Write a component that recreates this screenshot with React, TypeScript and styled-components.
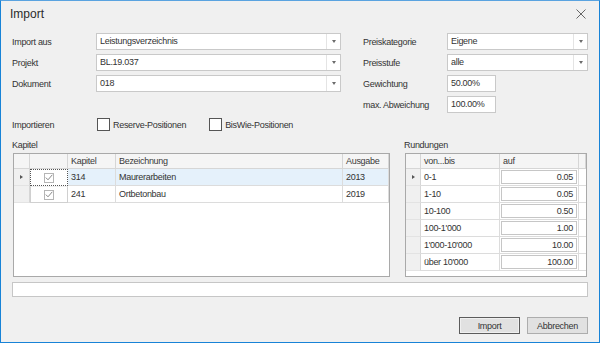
import styled, { createGlobalStyle } from "styled-components";

const GlobalStyle = createGlobalStyle`
  body {
    margin: 0;
    background: #ffffff;
  }
`;

const Window = styled.div`
  width: 600px;
  height: 343px;
  box-sizing: border-box;
  border: 1px solid #1883d7;
  border-top-color: #5aa3e0;
  background: #f0f0f0;
  display: flex;
  flex-direction: column;
  font-family: "Liberation Sans", Arial, sans-serif;
  font-size: 9px;
  letter-spacing: -0.3px;
  color: #333;
`;

const TitleBar = styled.div`
  height: 26px;
  display: flex;
  align-items: center;
  justify-content: space-between;
  padding: 0 13px 0 9px;
`;

const Title = styled.span`
  font-size: 12px;
  letter-spacing: 0;
  color: #2b2b2b;
`;

const CloseButton = styled.button`
  width: 10px;
  height: 10px;
  padding: 0;
  border: 0;
  background: none;
  display: flex;
`;

const Body = styled.div`
  flex: 1;
  display: flex;
  flex-direction: column;
  padding: 6px 11px 8px 11px;
`;

const FormRow = styled.div`
  display: flex;
  gap: 22px;
`;

const FormGrid = styled.div<{ $label: number; $field: number }>`
  display: grid;
  grid-template-columns: ${(p) => p.$label}px ${(p) => p.$field}px;
  grid-auto-rows: 17px;
  row-gap: 4px;
  align-items: center;
`;

const Label = styled.span`
  color: #333;
  white-space: nowrap;
`;

const Combo = styled.div`
  height: 17px;
  box-sizing: border-box;
  border: 1px solid #c9c9c9;
  background: #fff;
  display: flex;
`;

const ComboText = styled.span`
  flex: 1;
  padding-left: 3px;
  line-height: 15px;
`;

const ComboButton = styled.span`
  width: 13px;
  border-left: 1px solid #e4e4e4;
  display: flex;
  align-items: center;
  justify-content: center;

  &::after {
    content: "";
    border-left: 2.5px solid transparent;
    border-right: 2.5px solid transparent;
    border-top: 3px solid #6b6b6b;
  }
`;

const TextBox = styled.div<{ $width?: number }>`
  width: ${(p) => (p.$width ? `${p.$width}px` : "auto")};
  height: 17px;
  box-sizing: border-box;
  border: 1px solid #c9c9c9;
  background: #fff;
  padding-left: 3px;
  line-height: 15px;
`;

const OptionsRow = styled.div`
  display: flex;
  align-items: center;
  height: 13px;
  margin-top: 5px;
`;

const OptionsLabel = styled.span`
  width: 85px;
`;

const CheckOption = styled.label`
  display: flex;
  align-items: center;
  gap: 3px;
  margin-right: 23px;
`;

const CheckBox = styled.span`
  width: 13px;
  height: 13px;
  box-sizing: border-box;
  border: 1px solid #555;
  background: #fff;
`;

const GridsRow = styled.div`
  display: flex;
  gap: 14px;
  margin-top: 9px;
`;

const Section = styled.div<{ $width: number }>`
  width: ${(p) => p.$width}px;
  display: flex;
  flex-direction: column;
`;

const SectionLabel = styled.span`
  height: 13px;
  line-height: 11px;
`;

const DataGrid = styled.div<{ $cols: string }>`
  margin-left: 1px;
  height: 124px;
  box-sizing: border-box;
  border: 1px solid #a9a9a9;
  background: #fff;
  display: grid;
  grid-template-columns: ${(p) => p.$cols};
  grid-auto-rows: 17px;
  grid-template-rows: 15px;
  align-content: start;
`;

const HeadCell = styled.div`
  background: #f5f5f5;
  border-right: 1px solid #d6d6d6;
  border-bottom: 1px solid #d6d6d6;
  padding-left: 3px;
  line-height: 14px;
  color: #3a3a3a;
`;

const Indicator = styled.div<{ $current?: boolean }>`
  background: #f0f0f0;
  border-right: 1px solid #d6d6d6;
  border-bottom: 1px solid #e3e3e3;
  display: flex;
  align-items: center;
  justify-content: center;

  &::after {
    content: "";
    display: ${(p) => (p.$current ? "block" : "none")};
    border-top: 2.5px solid transparent;
    border-bottom: 2.5px solid transparent;
    border-left: 3px solid #555;
  }
`;

const Cell = styled.div<{ $selected?: boolean; $right?: boolean }>`
  background: ${(p) => (p.$selected ? "#e5f1fb" : "#fff")};
  border-right: 1px solid #dcdcdc;
  border-bottom: 1px solid #dcdcdc;
  padding: 0 3px;
  line-height: 16px;
  text-align: ${(p) => (p.$right ? "right" : "left")};
  white-space: nowrap;
  overflow: hidden;
`;

const CheckCell = styled.div<{ $focused?: boolean }>`
  background: #fff;
  border: 1px ${(p) => (p.$focused ? "dotted #555" : "solid #d0d0d0")};
  border-top-color: ${(p) => (p.$focused ? "#555" : "#f0f0f0")};
  display: flex;
  align-items: center;
  justify-content: center;
`;

const GridCheck = styled.span`
  width: 10px;
  height: 10px;
  box-sizing: border-box;
  border: 1px solid #b5b5b5;
  display: flex;
  align-items: center;
  justify-content: center;
`;

const ValueCell = styled.div`
  background: #fff;
  border-right: 1px solid #dcdcdc;
  border-bottom: 1px solid #dcdcdc;
  padding: 1px;
  display: flex;
`;

const ValueBox = styled.span`
  flex: 1;
  border: 1px solid #c6c6c6;
  text-align: right;
  padding-right: 3px;
  line-height: 12px;
`;

const Filler = styled.div`
  background: #fff;
  border-bottom: 1px solid #dcdcdc;
`;

const StatusBox = styled.div`
  margin-top: 5px;
  height: 15px;
  box-sizing: border-box;
  border: 1px solid #c6c6c6;
  background: #fff;
`;

const ButtonRow = styled.div`
  margin-top: auto;
  display: flex;
  justify-content: flex-end;
  gap: 7px;
`;

const Button = styled.button<{ $default?: boolean }>`
  width: 61px;
  height: 17px;
  padding: 0;
  font-family: inherit;
  font-size: 9px;
  letter-spacing: -0.3px;
  color: #333;
  background: #e1e1e1;
  border: 1px solid ${(p) => (p.$default ? "#5c5c5c" : "#adadad")};
  box-shadow: ${(p) => (p.$default ? "inset 0 0 0 1px #f0f0f0" : "none")};
`;

const kapitel = [
  { nr: "314", name: "Maurerarbeiten", year: "2013" },
  { nr: "241", name: "Ortbetonbau", year: "2019" },
];

const rundungen = [
  { range: "0-1", value: "0.05" },
  { range: "1-10", value: "0.05" },
  { range: "10-100", value: "0.50" },
  { range: "100-1'000", value: "1.00" },
  { range: "1'000-10'000", value: "10.00" },
  { range: "über 10'000", value: "100.00" },
];

function Check() {
  return (
    <svg width="8" height="7" viewBox="0 0 8 7">
      <path d="M0.8 3.6 L3 5.8 L7.3 0.8" fill="none" stroke="#7a7a7a" strokeWidth="0.9" />
    </svg>
  );
}

function ComboField({ value }: { value: string }) {
  return (
    <Combo>
      <ComboText>{value}</ComboText>
      <ComboButton />
    </Combo>
  );
}

export default function App() {
  return (
    <>
      <GlobalStyle />
      <Window>
        <TitleBar>
          <Title>Import</Title>
          <CloseButton>
            <svg width="10" height="10" viewBox="0 0 10 10">
              <path d="M0.5 0.5 L9.5 9.5 M9.5 0.5 L0.5 9.5" stroke="#666" strokeWidth="1" />
            </svg>
          </CloseButton>
        </TitleBar>
        <Body>
          <FormRow>
            <FormGrid $label={84} $field={245}>
              <Label>Import aus</Label>
              <ComboField value="Leistungsverzeichnis" />
              <Label>Projekt</Label>
              <ComboField value="BL.19.037" />
              <Label>Dokument</Label>
              <ComboField value="018" />
            </FormGrid>
            <FormGrid $label={84} $field={141}>
              <Label>Preiskategorie</Label>
              <ComboField value="Eigene" />
              <Label>Preisstufe</Label>
              <ComboField value="alle" />
              <Label>Gewichtung</Label>
              <TextBox $width={49}>50.00%</TextBox>
              <Label>max. Abweichung</Label>
              <TextBox $width={49}>100.00%</TextBox>
            </FormGrid>
          </FormRow>

          <OptionsRow>
            <OptionsLabel>Importieren</OptionsLabel>
            <CheckOption>
              <CheckBox />
              Reserve-Positionen
            </CheckOption>
            <CheckOption>
              <CheckBox />
              BisWie-Positionen
            </CheckOption>
          </OptionsRow>

          <GridsRow>
            <Section $width={378}>
              <SectionLabel>Kapitel</SectionLabel>
              <DataGrid $cols="16px 38px 48px 227px 46px">
                <HeadCell />
                <HeadCell />
                <HeadCell>Kapitel</HeadCell>
                <HeadCell>Bezeichnung</HeadCell>
                <HeadCell>Ausgabe</HeadCell>
                {kapitel.map((k, i) => (
                  <>
                    <Indicator key={`i${k.nr}`} $current={i === 0} />
                    <CheckCell key={`c${k.nr}`} $focused={i === 0}>
                      <GridCheck>
                        <Check />
                      </GridCheck>
                    </CheckCell>
                    <Cell key={`n${k.nr}`} $selected={i === 0}>{k.nr}</Cell>
                    <Cell key={`b${k.nr}`} $selected={i === 0}>{k.name}</Cell>
                    <Cell key={`y${k.nr}`} $selected={i === 0}>{k.year}</Cell>
                  </>
                ))}
              </DataGrid>
            </Section>
            <Section $width={183}>
              <SectionLabel>Rundungen</SectionLabel>
              <DataGrid $cols="15px 79px 79px 7px">
                <HeadCell />
                <HeadCell>von...bis</HeadCell>
                <HeadCell>auf</HeadCell>
                <HeadCell />
                {rundungen.map((r, i) => (
                  <>
                    <Indicator key={`i${r.range}`} $current={i === 0} />
                    <Cell key={`r${r.range}`}>{r.range}</Cell>
                    <ValueCell key={`v${r.range}`}>
                      <ValueBox>{r.value}</ValueBox>
                    </ValueCell>
                    <Filler key={`f${r.range}`} />
                  </>
                ))}
              </DataGrid>
            </Section>
          </GridsRow>

          <StatusBox />

          <ButtonRow>
            <Button $default>Import</Button>
            <Button>Abbrechen</Button>
          </ButtonRow>
        </Body>
      </Window>
    </>
  );
}
